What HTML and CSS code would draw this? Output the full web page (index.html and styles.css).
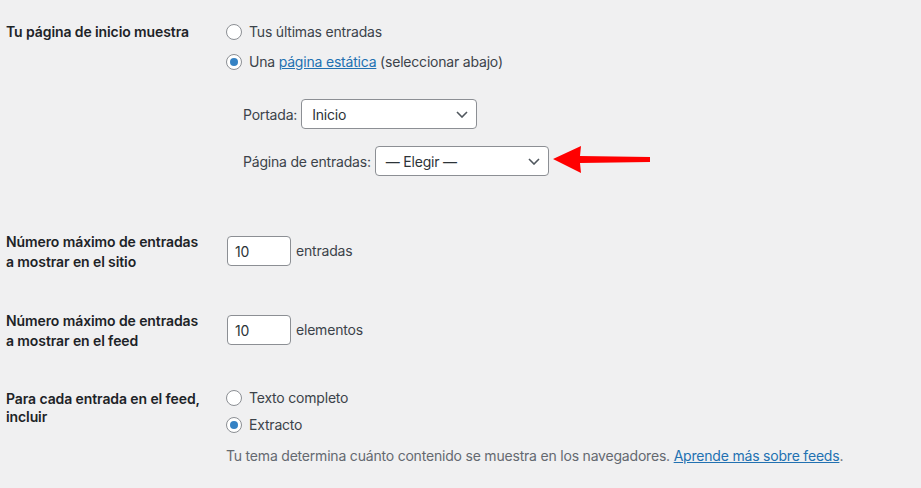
FILE: index.html
```html
<!DOCTYPE html>
<html lang="es">
<head>
<meta charset="utf-8">
<link rel="stylesheet" href="styles.css">
</head>
<body>
<div class="form">
  <div class="row row-front">
    <div class="th">Tu página de inicio muestra</div>
    <div class="td">
      <label class="opt"><span class="radio"></span>Tus últimas entradas</label>
      <label class="opt opt-gap"><span class="radio checked"></span>Una&nbsp;<a href="#">página estática</a>&nbsp;(seleccionar abajo)</label>
      <div class="sub">
        <div class="sub-line">
          <span class="sub-label">Portada:</span>
          <span class="select sel-front">Inicio<svg class="chev" viewBox="0 0 12 7"><path d="M1 1l5 5 5-5"/></svg></span>
        </div>
        <div class="sub-line sub-line2">
          <span class="sub-label">Página de entradas:</span>
          <span class="select sel-posts">— Elegir —<svg class="chev" viewBox="0 0 12 7"><path d="M1 1l5 5 5-5"/></svg></span>
        </div>
      </div>
    </div>
    <svg class="red-arrow" viewBox="0 0 100 30" width="100" height="30">
      <polygon points="1,14 29,1 28,11 98,12 98,17 28,18 29,28" fill="#ff0000"/>
    </svg>
  </div>
  <div class="row row-num">
    <div class="th">Número máximo de entradas a mostrar en el sitio</div>
    <div class="td td-num">
      <span class="num">10</span><span class="unit">entradas</span>
    </div>
  </div>
  <div class="row row-num">
    <div class="th">Número máximo de entradas a mostrar en el feed</div>
    <div class="td td-num">
      <span class="num">10</span><span class="unit">elementos</span>
    </div>
  </div>
  <div class="row row-feed">
    <div class="th th-feed">Para cada entrada en el feed, incluir</div>
    <div class="td td-feed">
      <label class="opt"><span class="radio"></span>Texto completo</label>
      <label class="opt opt-gap2"><span class="radio checked"></span>Extracto</label>
      <p class="desc">Tu tema determina cuánto contenido se muestra en los navegadores. <a href="#">Aprende más sobre feeds</a>.</p>
    </div>
  </div>
</div>
</body>
</html>
```
FILE: styles.css
```css
html, body {
  margin: 0;
  padding: 0;
  background: #f0f0f1;
}
body {
  font-family: Inter, "Noto Sans", "Liberation Sans", sans-serif;
  font-size: 14px;
  color: #1d2327;
  letter-spacing: -0.2px;
  width: 921px;
  height: 488px;
  overflow: hidden;
}
.form {
  padding-left: 6px;
}
.row {
  display: flex;
  position: relative;
}
.th {
  width: 200px;
  padding: 20px 20px 20px 0;
  font-weight: 600;
  letter-spacing: -0.1px;
  line-height: 19.5px;
  flex: none;
}
.row-front .th { padding-top: 22px; }
.th-feed { line-height: 18px; padding-top: 20px; }
.td {
  flex: 1;
}
.row-front .td {
  padding-top: 22px;
  padding-bottom: 36px;
}
.opt {
  display: flex;
  align-items: center;
  height: 20px;
  line-height: 20px;
  white-space: nowrap;
}
.opt-gap { margin-top: 10px; }
.opt-gap2 { margin-top: 7px; }
.radio {
  box-sizing: border-box;
  width: 16px;
  height: 16px;
  border: 1px solid #8c8f94;
  border-radius: 50%;
  background: #fff;
  margin-right: 7px;
  flex: none;
  display: flex;
  align-items: center;
  justify-content: center;
}
.radio.checked::after {
  content: "";
  width: 8px;
  height: 8px;
  border-radius: 50%;
  background: #3582c4;
}
a {
  color: #2271b1;
  text-decoration: underline;
}
.sub {
  margin-left: 17px;
  margin-top: 27px;
}
.sub-line {
  display: flex;
  align-items: center;
  gap: 4px;
  color: #3c434a;
}
.sub-line2 { margin-top: 17px; }
.select {
  box-sizing: border-box;
  height: 30px;
  border: 1px solid #8c8f94;
  border-radius: 4px;
  background: #fff;
  display: flex;
  align-items: center;
  padding: 0 8px 0 10px;
  color: #2c3338;
  justify-content: space-between;
}
.sel-front { width: 176px; }
.sel-posts { width: 174px; }
.chev {
  width: 12px;
  height: 7px;
  fill: none;
  stroke: #50575e;
  stroke-width: 1.6;
}
.red-arrow {
  position: absolute;
  left: 546px;
  top: 145px;
}
.td-num {
  padding-top: 24px;
  display: flex;
  align-items: flex-start;
}
.num {
  box-sizing: border-box;
  width: 64px;
  height: 30px;
  border: 1px solid #8c8f94;
  border-radius: 4px;
  background: #fff;
  padding-left: 7px;
  display: flex;
  align-items: center;
  color: #2c3338;
  margin-left: 1px;
}
.unit {
  margin-left: 5px;
  line-height: 30px;
  color: #3c434a;
}
.td-feed {
  padding-top: 18px;
}
.td-feed .opt { color: #3c434a; }
.row-front .opt { color: #3c434a; }
.desc {
  margin: 11px 0 0;
  line-height: 20px;
  color: #646970;
  white-space: nowrap;
}
```
